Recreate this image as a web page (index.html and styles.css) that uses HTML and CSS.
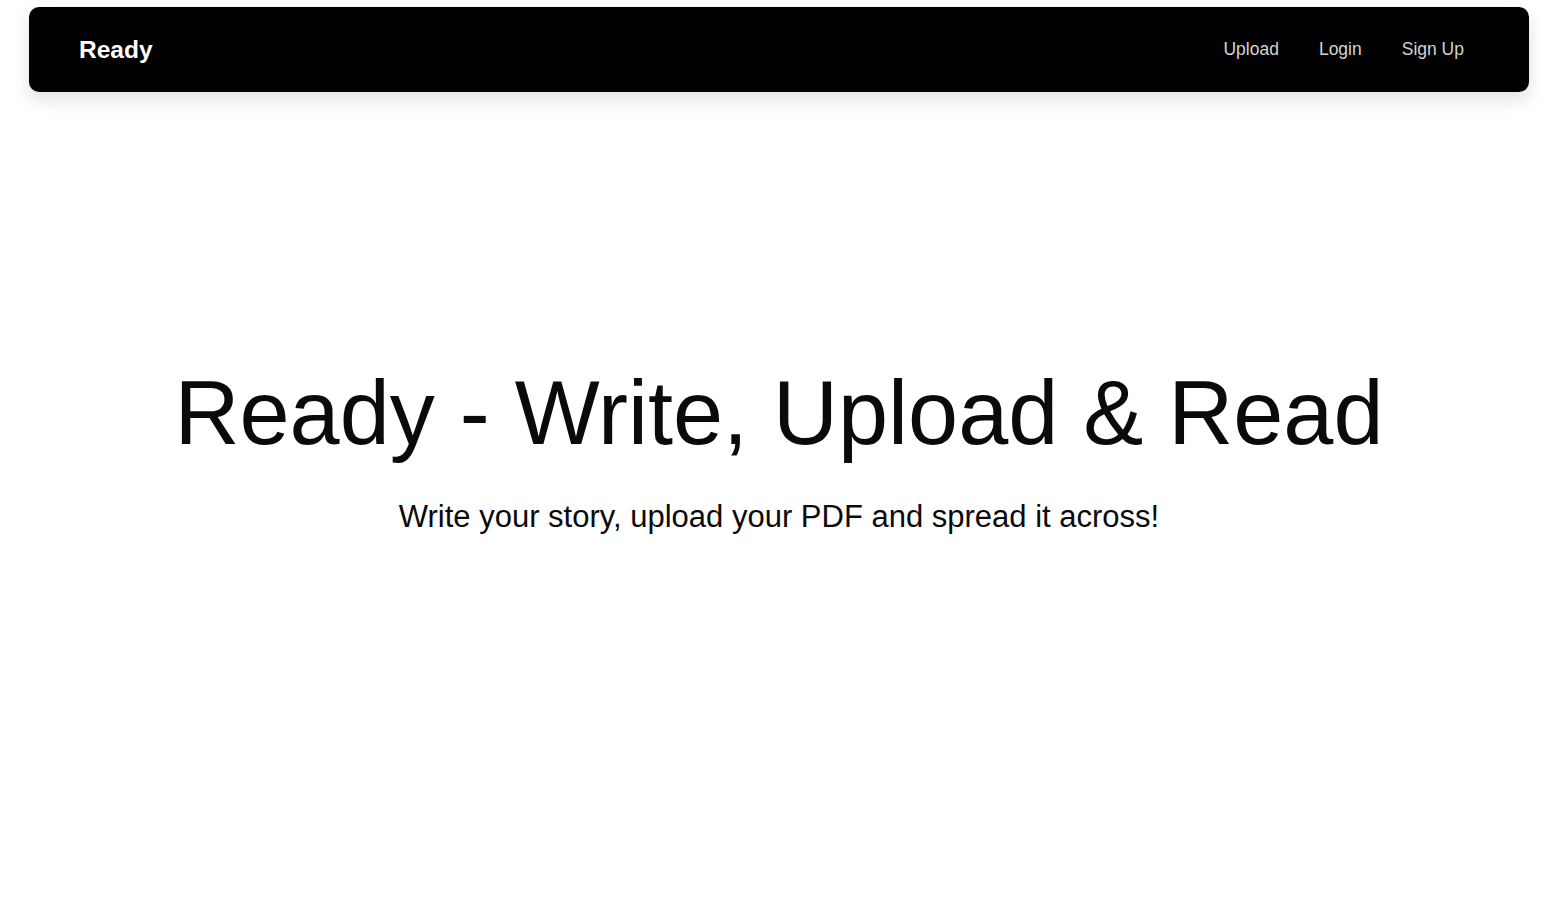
FILE: index.html
```
<!DOCTYPE html>
<html lang="en">
<head>
<meta charset="utf-8">
<title>Ready</title>
<link rel="stylesheet" href="styles.css">
</head>
<body>
<div class="page">
  <nav class="navbar">
    <a class="brand" href="#">Ready</a>
    <div class="links">
      <a href="#">Upload</a>
      <a href="#">Login</a>
      <a href="#">Sign Up</a>
    </div>
  </nav>
  <main class="hero">
    <h1 class="title">Ready - Write, Upload &amp; Read</h1>
    <p class="subtitle">Write your story, upload your PDF and spread it across!</p>
  </main>
</div>
</body>
</html>
```
FILE: styles.css
```
html, body {
  margin: 0;
  padding: 0;
  background: #fff;
}
.page {
  padding: 7px 37px 0 29px;
  font-family: "Liberation Sans", Arial, sans-serif;
}
.navbar {
  background: #000;
  border-radius: 10px;
  height: 85px;
  display: flex;
  align-items: center;
  justify-content: space-between;
  padding: 0 65px 0 50px;
  box-shadow: 0 8px 18px rgba(0, 0, 0, 0.12);
}
.brand {
  color: #fff;
  font-weight: 700;
  font-size: 24.5px;
  text-decoration: none;
}
.links {
  display: flex;
  gap: 40px;
}
.links a {
  color: #d4d4d4;
  font-size: 17.5px;
  text-decoration: none;
}
.hero {
  display: flex;
  flex-direction: column;
  align-items: center;
  padding-top: 266px;
}
.title {
  margin: 0;
  font-weight: 400;
  font-size: 90px;
  line-height: 110px;
  color: #0a0a0a;
}
.subtitle {
  margin: 31px 0 0;
  font-size: 31px;
  color: #0a0a0a;
}
```
